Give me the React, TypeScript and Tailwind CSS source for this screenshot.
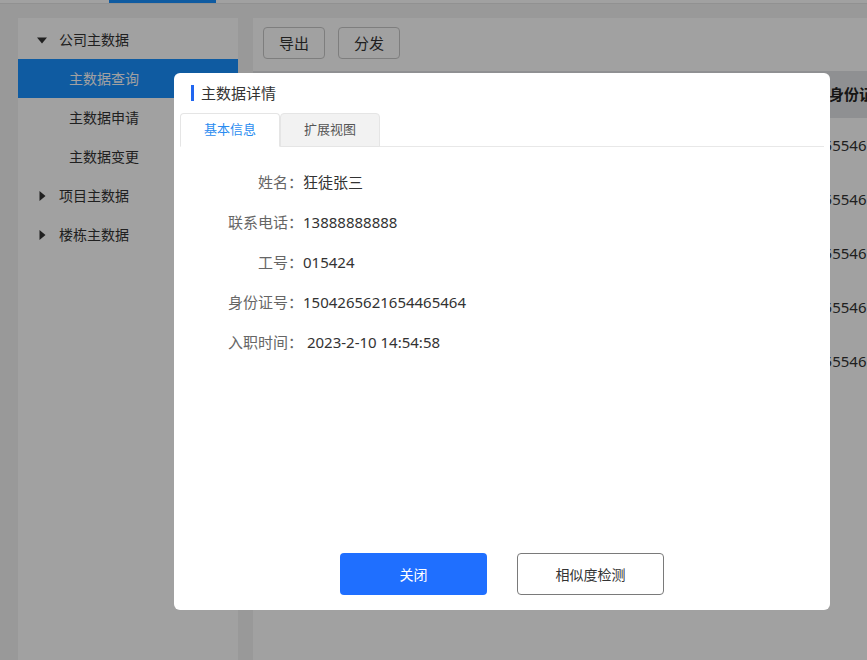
import { useState } from "react";

const menu = [
  { label: "公司主数据", open: true, children: ["主数据查询", "主数据申请", "主数据变更"] },
  { label: "项目主数据", open: false, children: [] },
  { label: "楼栋主数据", open: false, children: [] },
];

const fields = [
  { label: "姓名：", value: "狂徒张三" },
  { label: "联系电话：", value: "13888888888" },
  { label: "工号：", value: "015424" },
  { label: "身份证号：", value: "1504265621654465464" },
  { label: "入职时间：", value: "\u00a02023-2-10 14:54:58" },
];

const Caret = ({ open }: { open: boolean }) => (
  <svg width="10" height="10" viewBox="0 0 10 10" className="shrink-0">
    {open ? <path d="M0 2.5h10L5 8.5z" fill="#333" /> : <path d="M2.5 0v10l6-5z" fill="#333" />}
  </svg>
);

export default function App() {
  const [tab, setTab] = useState(0);

  return (
    <div
      className="relative w-[867px] h-[660px] overflow-hidden bg-[#f3f3f3] text-[#333]"
      style={{ fontFamily: '"Noto Sans", "Noto Sans CJK SC", sans-serif' }}
    >
      {/* top nav strip */}
      <div className="h-[4px] bg-white border-b border-[#e6e6e6] flex">
        <div className="ml-[109px] w-[107px] bg-[#1890ff]" />
      </div>

      <div className="flex gap-[15px] pl-[18px] pt-[14px] h-[656px]">
        {/* sidebar */}
        <aside className="w-[220px] shrink-0 bg-white pt-[2px]">
          {menu.map((m) => (
            <div key={m.label}>
              <div className="h-[39px] flex items-center gap-[12px] pl-[19px] text-[14px]">
                <Caret open={m.open} />
                <span>{m.label}</span>
              </div>
              {m.children.map((c, i) => (
                <div
                  key={c}
                  className={`h-[39px] flex items-center pl-[51px] text-[14px] ${
                    i === 0 ? "bg-[#1890ff] text-white" : ""
                  }`}
                >
                  {c}
                </div>
              ))}
            </div>
          ))}
        </aside>

        {/* main panel */}
        <main className="flex-1 min-w-[620px] bg-white">
          <div className="flex gap-[13px] px-[10px] pt-[9px] pb-[12px]">
            <button className="w-[62px] h-[32px] border border-[#c8c8c8] rounded-[4px] bg-white text-[15px] text-[#333]">
              导出
            </button>
            <button className="w-[62px] h-[32px] border border-[#c8c8c8] rounded-[4px] bg-white text-[15px] text-[#333]">
              分发
            </button>
          </div>
          <div className="h-[47px] bg-[#e3e4e7] flex items-center pl-[576px] text-[15px] font-bold text-[#222] whitespace-nowrap overflow-hidden">
            身份证号
          </div>
          {[0, 1, 2, 3, 4].map((r) => (
            <div
              key={r}
              className="h-[54px] flex items-center pl-[562px] text-[15px] text-[#333] whitespace-nowrap overflow-hidden"
            >
              1555465464
            </div>
          ))}
        </main>
      </div>

      {/* mask */}
      <div className="absolute inset-0 bg-black/[0.37]" />

      {/* dialog */}
      <div className="absolute left-[174px] top-[73px] w-[656px] h-[537px] bg-white rounded-[6px] flex flex-col">
        <div className="flex items-center gap-[7px] pl-[17px] pt-[6px] h-[34px]">
          <span className="w-[3px] h-[16px] bg-[#2166f0]" />
          <span className="text-[15px] text-[#333]">主数据详情</span>
        </div>
        <div className="mx-[6px] mt-[6px] flex border-b border-[#e8e8e8] h-[34px]">
          {["基本信息", "扩展视图"].map((t, i) => (
            <button
              key={t}
              onClick={() => setTab(i)}
              className={`w-[100px] h-[34px] text-[13px] border border-[#e5e5e5] rounded-t-[4px] -mb-px ${
                tab === i
                  ? "bg-white border-b-white text-[#2a8cf0]"
                  : "bg-[#f2f2f2] text-[#555]"
              }`}
            >
              {t}
            </button>
          ))}
        </div>

        <div className="pt-[15px] flex flex-col">
          {fields.map((f) => (
            <div key={f.label} className="h-[40px] flex items-center text-[15px]">
              <span className="w-[129px] text-right text-[#666]">{f.label}</span>
              <span className="text-[#333]">{f.value}</span>
            </div>
          ))}
        </div>

        <div className="mt-auto mb-[15px] flex justify-center gap-[30px]">
          <button className="w-[147px] h-[42px] rounded-[4px] bg-[#1f6fff] text-white text-[14px]">
            关闭
          </button>
          <button className="w-[147px] h-[42px] rounded-[4px] border border-[#7a7a7a] bg-white text-[#333] text-[14px]">
            相似度检测
          </button>
        </div>
      </div>
    </div>
  );
}
